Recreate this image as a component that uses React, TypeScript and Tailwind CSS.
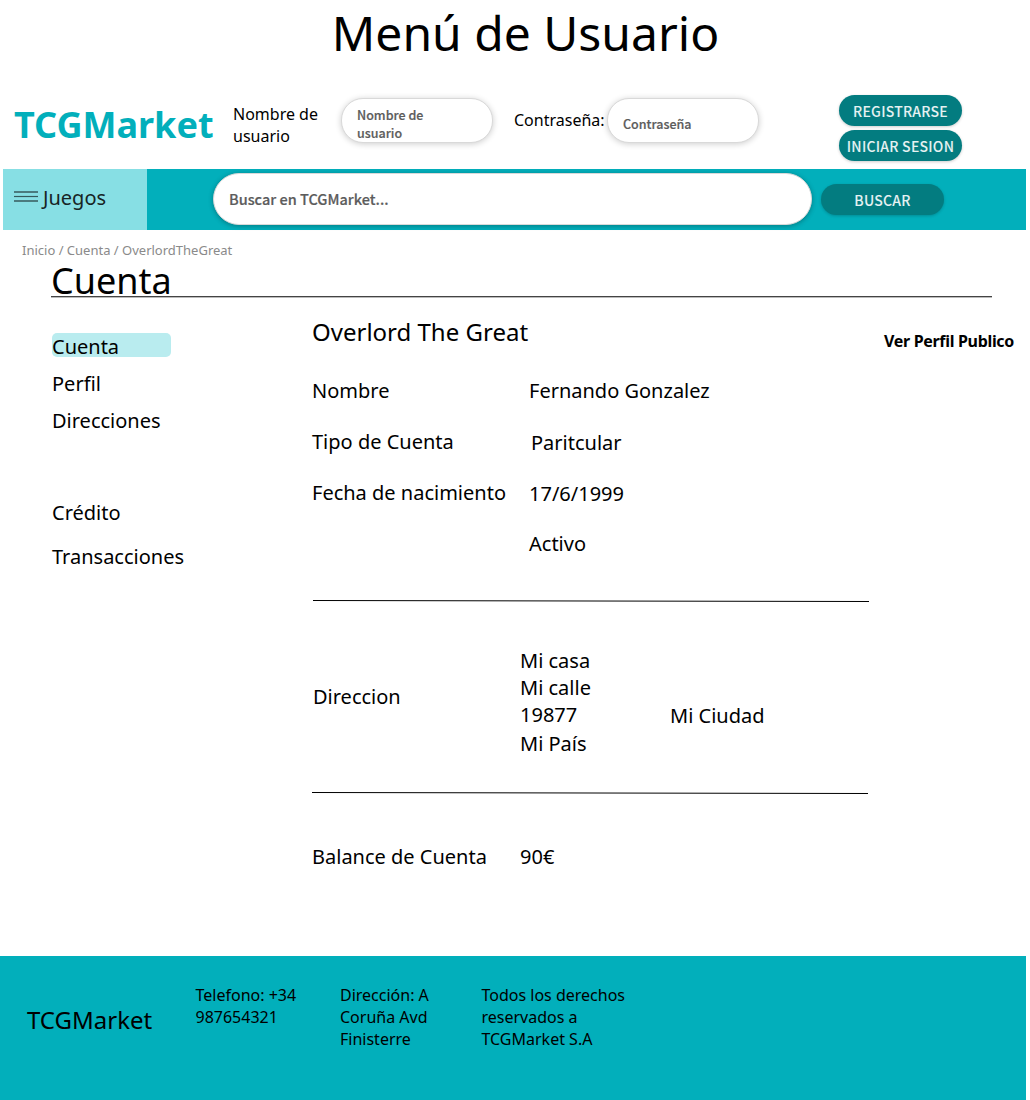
import type { ReactNode } from "react";

const pill =
  "shrink-0 rounded-full bg-[#037c80] text-center font-['Noto_Sans_CJK_JP','Noto_Sans',sans-serif] text-[14px] font-medium tracking-[0.25px] text-white/90 shadow-[0_1px_3px_rgba(0,0,0,0.2)] w-[123px] h-[31px] leading-[32px] whitespace-nowrap";

const field =
  "block shrink-0 overflow-hidden border border-[#d9d9d9] bg-white pl-[15px] font-['Noto_Sans_CJK_JP','Noto_Sans',sans-serif] font-medium text-[#5c5c5c] [-webkit-text-stroke:0.2px]";

function PillButton({ children }: { children: ReactNode }) {
  return <button className={pill}>{children}</button>;
}

function Divider({ className }: { className: string }) {
  return (
    <svg className={className} width="556" height="3" viewBox="0 0 556 3">
      <line x1="0" y1="0.5" x2="556" y2="1.5" stroke="#000" strokeWidth="1" />
    </svg>
  );
}

function Header() {
  return (
    <header className="flex h-[105px] items-start">
      <div className="ml-[14px] mt-[36px] w-[219px] text-[36px] font-bold leading-[49px] text-[#02afbb]">TCGMarket</div>
      <label className="mt-[39px] w-[108px] leading-[22px]">Nombre de usuario</label>
      <div className={`${field} mt-[34px] h-[45px] w-[152px] rounded-[22px] pt-[7px] pr-[50px] text-[12.5px] leading-[18px] shadow-[0_1px_6px_rgba(0,0,0,0.2)]`}>
        Nombre de usuario
      </div>
      <label className="ml-[21px] mt-[45px] w-[93px] whitespace-nowrap leading-[22px]">Contraseña:</label>
      <div className={`${field} mt-[34px] h-[45px] w-[152px] rounded-[22px] pt-[16px] text-[12.5px] leading-[18px] shadow-[0_1px_6px_rgba(0,0,0,0.2)]`}>
        Contraseña
      </div>
      <div className="ml-[80px] mt-[31px] flex flex-col gap-1">
        <PillButton>REGISTRARSE</PillButton>
        <PillButton>INICIAR SESION</PillButton>
      </div>
    </header>
  );
}

function NavBar() {
  return (
    <nav className="ml-[3px] flex h-[61px] w-[1023px] items-start bg-[#02afbb]">
      <div className="flex h-full w-[144px] items-start bg-[#87dfe4] text-[#172424]">
        <svg className="ml-[11px] mt-[22px]" width="24" height="12" viewBox="0 0 24 12" stroke="#365a5c">
          <line x1="0" y1="1" x2="24" y2="1" strokeWidth="1.5" />
          <line x1="0" y1="5.5" x2="24" y2="5.5" strokeWidth="1.2" />
          <line x1="0" y1="10" x2="24" y2="10" strokeWidth="1.5" />
        </svg>
        <span className="ml-[5px] mt-[15px] text-[20px] leading-[27px]">Juegos</span>
      </div>
      <div className={`${field} ml-[66px] mt-[4px] h-[52px] w-[599px] rounded-[26px] text-[14.5px] leading-[49px] shadow-[0_1px_5px_rgba(0,0,0,0.3)]`}>
        Buscar en TCGMarket...
      </div>
      <div className="ml-[9px] mt-[15px]">
        <PillButton>BUSCAR</PillButton>
      </div>
    </nav>
  );
}

function Sidebar() {
  return (
    <aside className="ml-[52px] mt-[36px] w-[260px] text-[20px] leading-[27px]">
      <div className="h-[24px] w-[119px] rounded-[5px] bg-[#b9ecef]">Cuenta</div>
      <div className="mt-[13px]">Perfil</div>
      <div className="mt-[10px]">Direcciones</div>
      <div className="mt-[65px]">Crédito</div>
      <div className="mt-[17px]">Transacciones</div>
    </aside>
  );
}

function Details() {
  return (
    <main className="mt-[18px] w-[572px] text-[20px] leading-[27px]">
      <h2 className="text-[24px] leading-[33px]">Overlord The Great</h2>
      <section className="mt-[29px] flex h-[223px]">
        <div className="flex w-[217px] flex-col gap-6">
          <span>Nombre</span>
          <span>Tipo de Cuenta</span>
          <span>Fecha de nacimiento</span>
        </div>
        <div className="flex flex-col">
          <span>Fernando Gonzalez</span>
          <span className="ml-[2px] mt-[25px]">Paritcular</span>
          <span className="mt-6">17/6/1999</span>
          <span className="mt-[23px]">Activo</span>
        </div>
      </section>
      <Divider className="ml-px" />
      <section className="flex h-[189px] pt-[44px]">
        <span className="ml-px mt-[36px] w-[207px]">Direccion</span>
        <div className="flex w-[150px] flex-col">
          <span>Mi casa</span>
          <span>Mi calle</span>
          <span>19877</span>
          <span className="mt-[2px]">Mi País</span>
        </div>
        <span className="mt-[55px]">Mi Ciudad</span>
      </section>
      <Divider className="" />
      <section className="mt-[48px] flex">
        <span className="w-[208px]">Balance de Cuenta</span>
        <span>90€</span>
      </section>
    </main>
  );
}

function Footer() {
  return (
    <footer className="flex h-[144px] w-[1026px] items-start bg-[#02afbb] pt-[28px] leading-[22px]">
      <div className="ml-[27px] mt-[19px] w-[168.5px] text-[24px] leading-[33px]">TCGMarket</div>
      <p className="w-[144.5px] pr-[30px]">Telefono: +34 987654321</p>
      <p className="w-[141.5px] pr-[40px]">Dirección: A Coruña Avd Finisterre</p>
      <p className="w-[160px]">Todos los derechos reservados a TCGMarket S.A</p>
    </footer>
  );
}

export default function App() {
  return (
    <div className="h-[1100px] w-[1030px] overflow-hidden bg-white font-['Noto_Sans',sans-serif] text-base text-black">
      <h1 className="h-[64px] w-[1051px] text-center text-[48px] leading-[65px]">Menú de Usuario</h1>
      <Header />
      <NavBar />
      <div className="h-[67px]">
        <div className="ml-[22px] pt-[11px] text-[13px] leading-[18px] text-[#8a8a8a]">Inicio / Cuenta / OverlordTheGreat</div>
        <h2 className="ml-[51px] mt-px h-[36px] w-[941px] text-[36px] leading-[41px]">Cuenta</h2>
        <div className="ml-[51px] h-[2px] w-[941px] border-t border-[#444] bg-[#bbb]" />
      </div>
      <div className="flex h-[659px] items-start">
        <Sidebar />
        <Details />
        <a className="mt-[33px] whitespace-nowrap text-[16px] font-bold leading-[22px] tracking-[-0.32px]">Ver Perfil Publico</a>
      </div>
      <Footer />
    </div>
  );
}
